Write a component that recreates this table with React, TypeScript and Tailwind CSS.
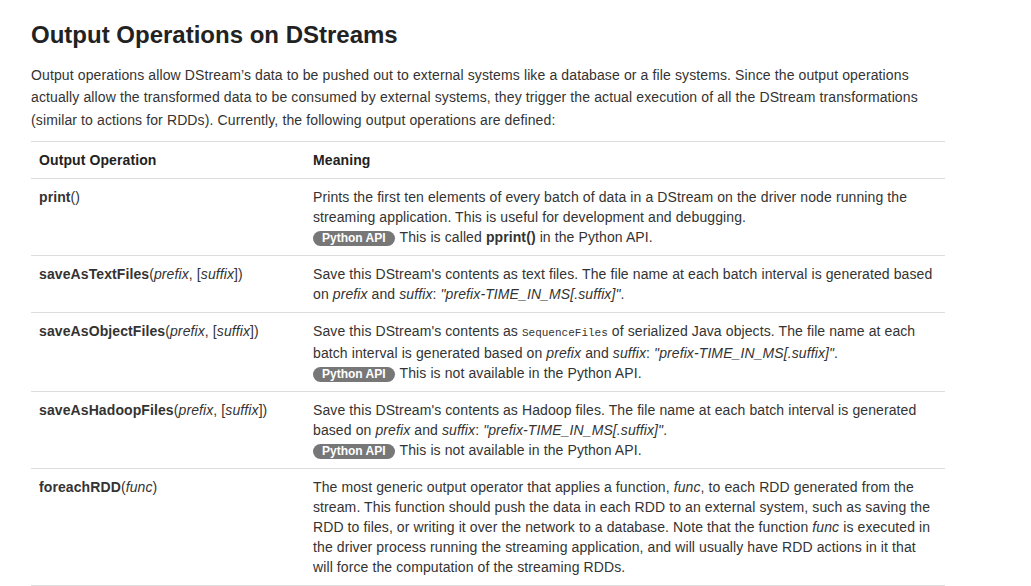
import React from "react";

const Badge = () => (
  <span className="mr-[5px] inline-block rounded-[9px] bg-[#777] px-[9px] text-[12px] font-bold leading-[15px] tracking-normal text-white align-baseline">
    Python API
  </span>
);

const Code = ({ children }: { children: React.ReactNode }) => (
  <code className="font-['Liberation_Mono',monospace] text-[11px] tracking-normal text-[#333]">{children}</code>
);

const Suffix = () => (
  <i>"prefix-TIME_IN_MS[.suffix]"</i>
);

type Row = { op: React.ReactNode; meaning: React.ReactNode };

const ROWS: Row[] = [
  {
    op: (
      <>
        <b>print</b>()
      </>
    ),
    meaning: (
      <>
        Prints the first ten elements of every batch of data in a DStream on the driver node running the
        streaming application. This is useful for development and debugging.
        <br />
        <Badge />
        This is called <b>pprint()</b> in the Python API.
      </>
    ),
  },
  {
    op: (
      <>
        <b>saveAsTextFiles</b>(<i>prefix</i>, [<i>suffix</i>])
      </>
    ),
    meaning: (
      <>
        Save this DStream's contents as text files. The file name at each batch interval is generated based
        on <i>prefix</i> and <i>suffix</i>: <Suffix />.
      </>
    ),
  },
  {
    op: (
      <>
        <b>saveAsObjectFiles</b>(<i>prefix</i>, [<i>suffix</i>])
      </>
    ),
    meaning: (
      <>
        Save this DStream's contents as <Code>SequenceFiles</Code> of serialized Java objects. The file name at each
        batch interval is generated based on <i>prefix</i> and <i>suffix</i>: <Suffix />.
        <br />
        <Badge />
        This is not available in the Python API.
      </>
    ),
  },
  {
    op: (
      <>
        <b>saveAsHadoopFiles</b>(<i>prefix</i>, [<i>suffix</i>])
      </>
    ),
    meaning: (
      <>
        Save this DStream's contents as Hadoop files. The file name at each batch interval is generated
        based on <i>prefix</i> and <i>suffix</i>: <Suffix />.
        <br />
        <Badge />
        This is not available in the Python API.
      </>
    ),
  },
  {
    op: (
      <>
        <b>foreachRDD</b>(<i>func</i>)
      </>
    ),
    meaning: (
      <>
        The most generic output operator that applies a function, <i>func</i>, to each RDD generated from the
        stream. This function should push the data in each RDD to an external system, such as saving the
        RDD to files, or writing it over the network to a database. Note that the function <i>func</i> is executed in
        the driver process running the streaming application, and will usually have RDD actions in it that
        will force the computation of the streaming RDDs.
      </>
    ),
  },
];

export default function App() {
  return (
    <div className="min-h-[586px] bg-white pl-[31px] pt-[20px] font-['Liberation_Sans',Arial,sans-serif] text-[14px] text-[#333]">
      <div className="w-[914px]">
        <h2 className="mb-[14px] text-[24px] font-bold leading-[30px] text-[#222]">Output Operations on DStreams</h2>
        <p className="mb-[10px] w-[890px] leading-[22.4px] tracking-[0.12px]">
          Output operations allow DStream’s data to be pushed out to external systems like a database or a file systems. Since the output operations
          actually allow the transformed data to be consumed by external systems, they trigger the actual execution of all the DStream transformations
          (similar to actions for RDDs). Currently, the following output operations are defined:
        </p>
        <table className="w-[914px] border-collapse leading-[20px] tracking-[0.1px]">
          <thead>
            <tr className="border-t border-[#ddd]">
              <th className="w-[274px] p-[8px] text-left font-bold text-[#222]">Output Operation</th>
              <th className="p-[8px] text-left font-bold text-[#222]">Meaning</th>
            </tr>
          </thead>
          <tbody>
            {ROWS.map((r, i) => (
              <tr key={i} className="border-t border-b border-[#ddd] align-top">
                <td className="p-[8px]">{r.op}</td>
                <td className="p-[8px]">{r.meaning}</td>
              </tr>
            ))}
          </tbody>
        </table>
      </div>
    </div>
  );
}
